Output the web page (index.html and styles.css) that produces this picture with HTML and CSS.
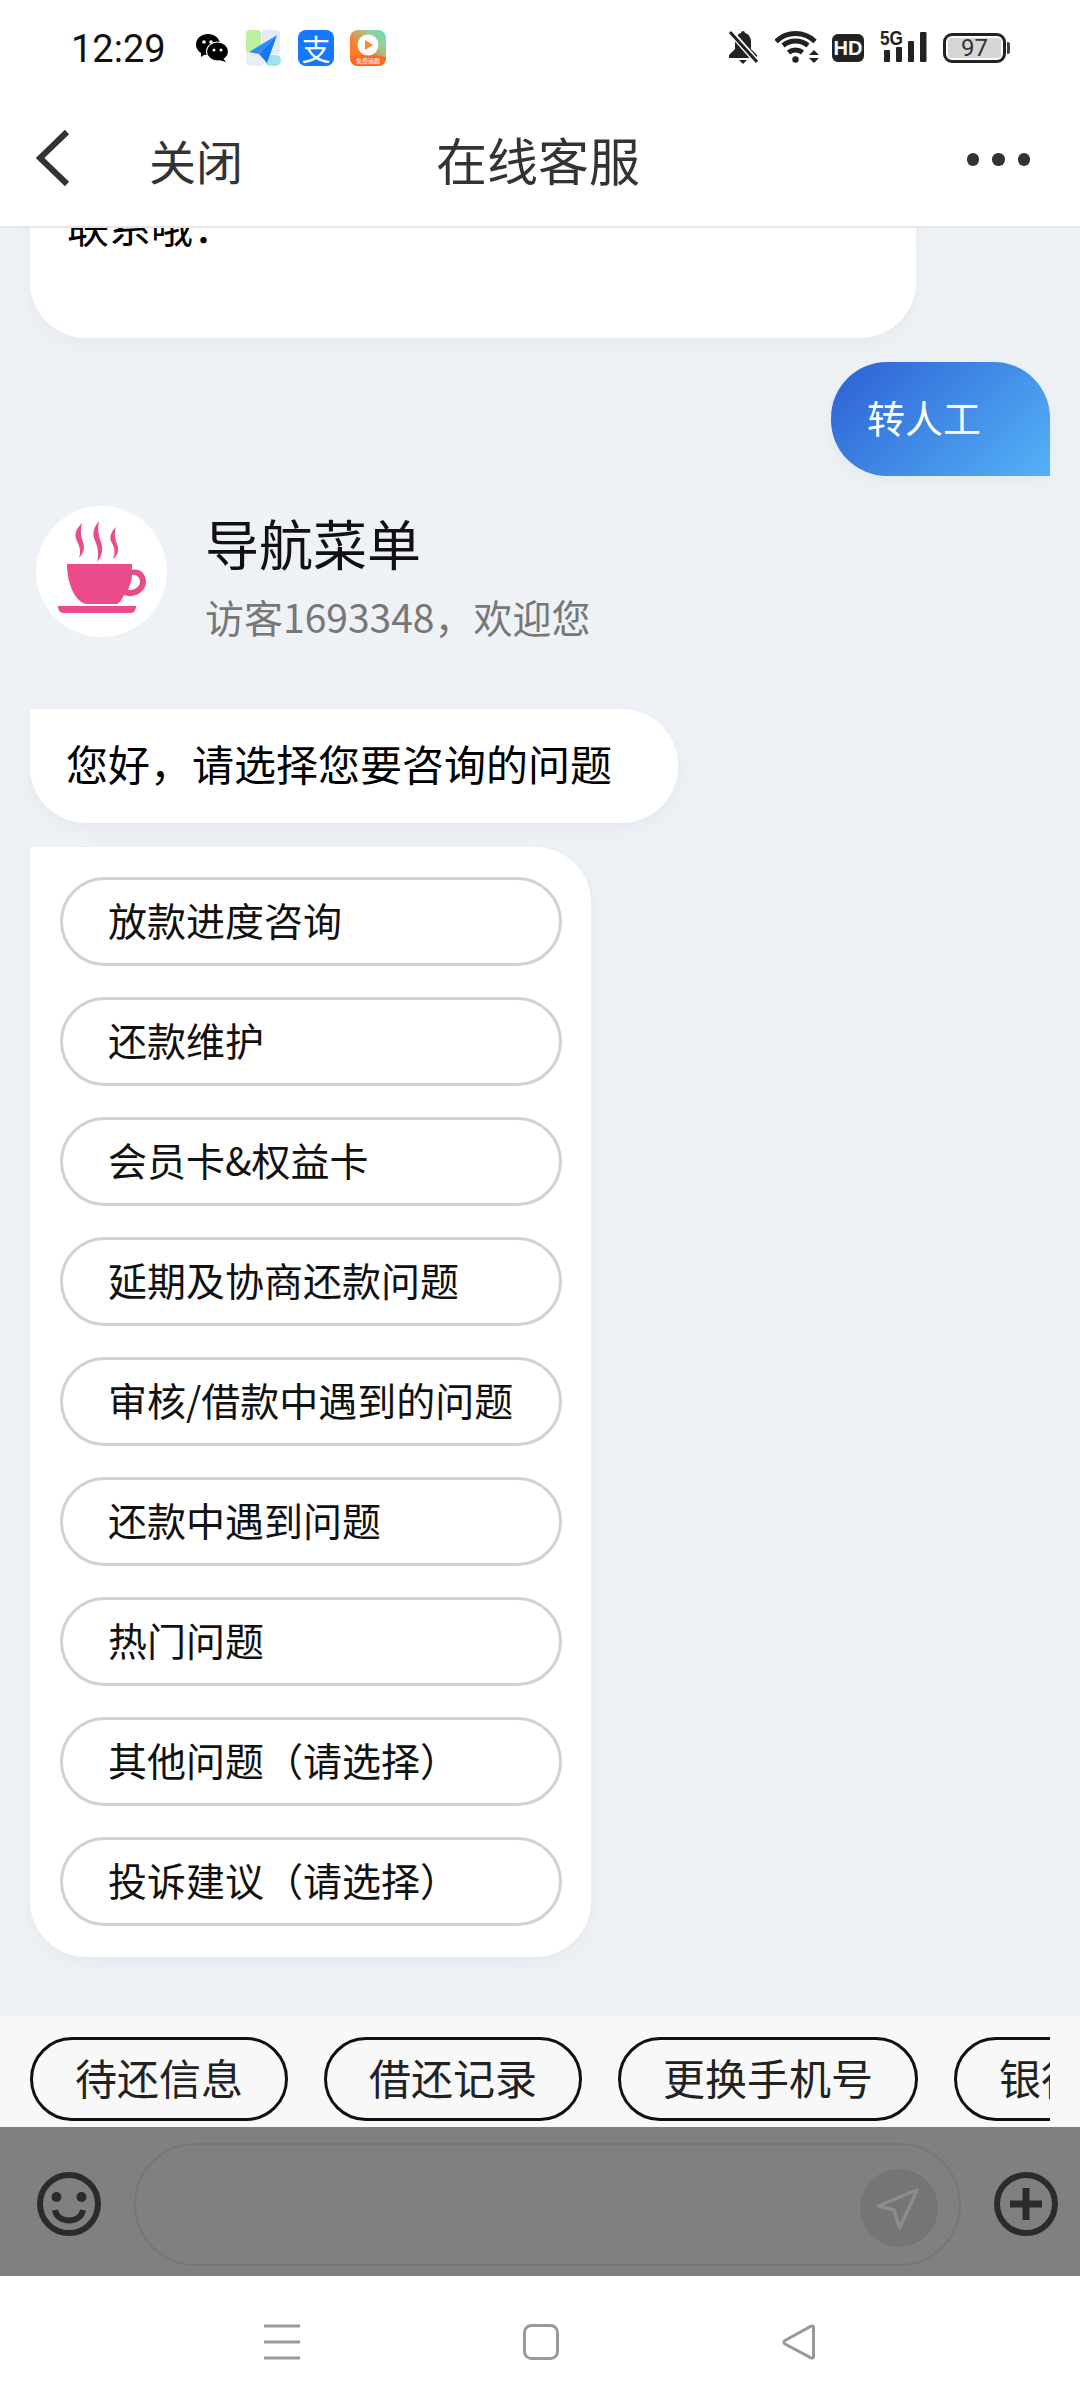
FILE: index.html
```html
<!DOCTYPE html>
<html lang="zh-CN">

<head>
    <meta charset="UTF-8">
    <meta name="viewport" content="width=device-width, initial-scale=1.0">
    <title>在线客服</title>
    <link rel="stylesheet" href="styles.css">
</head>

<body>
    <div class="phone">
        <!-- Status bar -->
        <div class="status-bar">
            <span class="time">12:29</span>
            <svg class="icon-wechat" width="32" height="28" viewBox="0 0 32 28">
                <ellipse cx="12" cy="10.5" rx="12" ry="10.5" fill="#000" />
                <path d="M5 17l0 6 6-4z" fill="#000" />
                <ellipse cx="21.5" cy="17.5" rx="11.5" ry="10" fill="#fff" />
                <ellipse cx="21.5" cy="17.5" rx="10.5" ry="9" fill="#000" />
                <path d="M27 24l3 4-7-2z" fill="#000" />
                <circle cx="8" cy="8" r="1.8" fill="#fff" />
                <circle cx="15" cy="8" r="1.8" fill="#fff" />
                <circle cx="18" cy="16" r="1.5" fill="#fff" />
                <circle cx="25" cy="16" r="1.5" fill="#fff" />
            </svg>
            <svg class="icon-app" width="36" height="36" viewBox="0 0 36 36">
                <rect x="0" y="0" width="15" height="24" rx="4" fill="#bdf0a0" />
                <rect x="16" y="0" width="18" height="24" rx="4" fill="#e3ecf6" />
                <rect x="0" y="22" width="18" height="14" rx="4" fill="#e8eef8" />
                <rect x="19" y="25" width="16" height="11" rx="5" fill="#9fe3f2" />
                <path d="M31 5L3 22l10 2z" fill="#2a8cf5" />
                <path d="M31 5L13 24l8 9z" fill="#1677f0" />
            </svg>
            <div class="icon-app alipay">支</div>
            <svg class="icon-app" width="36" height="36" viewBox="0 0 36 36">
                <defs>
                    <linearGradient id="videoBg" x1="0" y1="1" x2="1" y2="0">
                        <stop offset="0.35" stop-color="#ff7a26" />
                        <stop offset="0.75" stop-color="#8fd39a" />
                        <stop offset="1" stop-color="#62d8c0" />
                    </linearGradient>
                </defs>
                <rect width="36" height="36" rx="8" fill="url(#videoBg)" />
                <path d="M0 27q18-5 36 0v1a8 8 0 0 1-8 8H8a8 8 0 0 1-8-8z" fill="#ff6a1f" />
                <circle cx="18" cy="15" r="10.5" fill="#fff" />
                <path d="M15 10l8 5-8 5z" fill="#ff8a2a" />
                <text class="video-label" x="18" y="33" text-anchor="middle">免费追剧</text>
            </svg>
            <div class="status-right">
                <svg width="30" height="34" viewBox="0 0 30 34">
                    <path d="M15 1c-1 0-2 .8-2 2-4 1-6 5-6 9v7l-6 6v3h28v-3l-6-6v-7c0-4-2-8-6-9 0-1.200-1-2-2-2z" fill="#222" />
                    <path d="M11 30h8l-4 4z" fill="#222" />
                    <path d="M1 0l28 32" stroke="#fff" stroke-width="6" />
                    <path d="M2 2l27 30" stroke="#222" stroke-width="3" />
                </svg>
                <svg class="icon-wifi" width="44" height="33" viewBox="0 0 44 33" fill="none">
                    <path d="M1 11.500A28 28 0 0 1 40 11.500" stroke="#222" stroke-width="5" />
                    <path d="M8 15.500A20 20 0 0 1 33 15.500" stroke="#222" stroke-width="5" />
                    <path d="M13.500 22.500A11 11 0 0 1 27.500 22.500" stroke="#222" stroke-width="5" />
                    <circle cx="20.500" cy="29.500" r="3.200" fill="#222" />
                    <path d="M34 25h10l-5-5z" fill="#222" />
                    <path d="M34 28h10l-5 5z" fill="#222" />
                </svg>
                <div class="hd-badge">HD</div>
                <svg class="icon-signal" width="47" height="33" viewBox="0 0 47 33">
                    <text class="signal-label" x="0" y="15" textLength="23" lengthAdjust="spacingAndGlyphs">5G</text>
                    <rect x="4" y="20" width="6" height="12" rx="1" fill="#222" />
                    <rect x="16" y="17" width="6" height="15" rx="1" fill="#222" />
                    <rect x="28" y="11" width="6" height="21" rx="1" fill="#222" />
                    <rect x="40" y="2" width="6.500" height="30" rx="1" fill="#222" />
                </svg>
                <div class="battery">
                    <div class="battery-body"><span class="battery-level">97</span></div>
                    <div class="battery-tip"></div>
                </div>
            </div>
        </div>

        <!-- Title bar -->
        <div class="topbar">
            <svg class="back-icon" width="34" height="58" viewBox="0 0 34 58" fill="none">
                <path d="M31 3L4 29l27 26" stroke="#333" stroke-width="6" />
            </svg>
            <span class="close-link">关闭</span>
            <span class="page-title">在线客服</span>
            <div class="more-dots"><i></i><i></i><i></i></div>
        </div>

        <!-- Messages -->
        <div class="chat">
            <div class="bubble top-card">联系哦：</div>
            <div class="bubble bubble-me">转人工</div>

            <div class="bot-head">
                <div class="avatar">
                    <svg width="131" height="131" viewBox="0 0 131 131" fill="none">
                        <path d="M46 17c-9 9-7 14-4 20 2 5 3 10 1 15 5-5 6-10 4-16-2-6-3-11-1-19z" fill="#e94b8b" />
                        <path d="M63 15c-8 10-6 15-3 22 2 6 3 12 1 19 6-7 6-13 4-20-2-6-4-12-2-21z" fill="#e94b8b" />
                        <path d="M80 21c-8 8-6 13-3 18 2 4 2 9 0 14 6-5 6-10 4-15-2-5-3-10-1-17z" fill="#e94b8b" />
                        <path d="M31 58h65v6c7-2 14 3 14 12 0 10-12 17-22 13-2 4-4 8-7 9H50c-12-3-19-22-19-40z" fill="#e94b8b" />
                        <path d="M96 69c5-1 8 3 8 7 0 5-7 9-12 8 2-5 4-10 4-15z" fill="#fff" />
                        <path d="M22 100h78c0 4-2 7-5 7H27c-3 0-5-3-5-7z" fill="#e94b8b" />
                    </svg>
                </div>
                <div class="bot-info">
                    <div class="bot-name">导航菜单</div>
                    <div class="bot-welcome">访客1693348，欢迎您</div>
                </div>
            </div>

            <div class="bubble bubble-bot">您好，请选择您要咨询的问题</div>

            <div class="bubble menu-card">
                <div class="menu-option">放款进度咨询</div>
                <div class="menu-option">还款维护</div>
                <div class="menu-option">会员卡&amp;权益卡</div>
                <div class="menu-option">延期及协商还款问题</div>
                <div class="menu-option">审核/借款中遇到的问题</div>
                <div class="menu-option">还款中遇到问题</div>
                <div class="menu-option">热门问题</div>
                <div class="menu-option">其他问题（请选择）</div>
                <div class="menu-option">投诉建议（请选择）</div>
            </div>
        </div>

        <!-- Quick links -->
        <div class="quick-bar">
            <div class="quick-list">
                <div class="chip">待还信息</div>
                <div class="chip">借还记录</div>
                <div class="chip">更换手机号</div>
                <div class="chip">银行卡</div>
            </div>
        </div>

        <!-- Input (dimmed) -->
        <div class="input-bar">
            <svg class="round-icon" width="64" height="64" viewBox="0 0 64 64" fill="none">
                <circle cx="32" cy="32" r="29" stroke="#2b2b2b" stroke-width="6" />
                <circle cx="19.500" cy="25" r="5" fill="#2b2b2b" />
                <circle cx="44.500" cy="25" r="5" fill="#2b2b2b" />
                <path d="M18 38c2 14 26 14 28 0" stroke="#2b2b2b" stroke-width="6" />
            </svg>
            <div class="input-box">
                <div class="send-btn">
                    <svg width="78" height="78" viewBox="0 0 78 78" fill="none">
                        <path d="M57 21L18 37l16 4 5.500 18z" stroke="#8c8c8c" stroke-width="3.500" stroke-linejoin="round" />
                    </svg>
                </div>
            </div>
            <svg class="round-icon" width="64" height="64" viewBox="0 0 64 64" fill="none">
                <circle cx="32" cy="32" r="29" stroke="#2b2b2b" stroke-width="6" />
                <path d="M32 16v32M16 32h32" stroke="#2b2b2b" stroke-width="7" />
            </svg>
        </div>

        <!-- System navigation -->
        <div class="nav-bar">
            <svg width="36" height="36" viewBox="0 0 36 36" fill="none">
                <path d="M0 2h36M0 18h36M0 34h36" stroke="#999" stroke-width="3" />
            </svg>
            <svg width="36" height="36" viewBox="0 0 36 36" fill="none">
                <rect x="1.500" y="1.500" width="33" height="33" rx="7" stroke="#999" stroke-width="3" />
            </svg>
            <svg width="34" height="36" viewBox="0 0 34 36" fill="none">
                <path d="M31.500 3.500c0-1.500-1-2-2.500-1.300L3 16.500c-1.500 1-1.500 2.500 0 3.500l26 13.800c1.500.7 2.500.2 2.500-1.300z" stroke="#999" stroke-width="3" />
            </svg>
        </div>
    </div>
</body>

</html>
```

FILE: styles.css
```css
* {
    box-sizing: border-box;
}

body {
    margin: 0;
    padding: 0;
    background-color: #fff;
    font-family: "Noto Sans CJK SC", "Noto Sans", sans-serif;
}

.phone {
    width: 1080px;
    height: 2408px;
    display: flex;
    flex-direction: column;
    overflow: hidden;
}

/* status bar */
.status-bar {
    height: 90px;
    flex-shrink: 0;
    display: flex;
    align-items: flex-start;
    padding: 31px 70px 0 71px;
    background: #fff;
}

.time {
    font-family: Roboto, sans-serif;
    font-size: 38px;
    line-height: 36px;
    color: #111;
    width: 125px;
}

.icon-wechat {
    margin-top: 3px;
    margin-right: 18px;
}

.icon-app {
    width: 36px;
    height: 36px;
    margin-top: -1px;
    margin-right: 16px;
    flex-shrink: 0;
}

.alipay {
    background: #1677ff;
    border-radius: 8px;
    color: #fff;
    font-size: 29px;
    line-height: 36px;
    text-align: center;
}

.video-label {
    font-size: 6px;
    fill: #fff;
}

.status-right {
    margin-left: auto;
    margin-top: -1px;
    display: flex;
    align-items: flex-start;
}

.icon-wifi {
    margin-left: 17px;
}

.hd-badge {
    width: 32px;
    height: 28px;
    margin-top: 4px;
    margin-left: 13px;
    background: #222;
    border-radius: 6px;
    color: #fff;
    font-family: "Liberation Sans", sans-serif;
    font-size: 20px;
    font-weight: bold;
    line-height: 28px;
    text-align: center;
}

.icon-signal {
    margin-left: 16px;
}

.signal-label {
    font-family: "Liberation Sans", sans-serif;
    font-size: 20px;
    font-weight: bold;
    fill: #222;
}

.battery {
    display: flex;
    align-items: center;
    margin-left: 16px;
    margin-top: 3px;
}

.battery-body {
    width: 63px;
    height: 30px;
    border: 3px solid #222;
    border-radius: 9px;
    padding: 2px;
}

.battery-level {
    display: block;
    height: 20px;
    background: #d6d6d6;
    border-radius: 3px;
    font-family: Roboto, sans-serif;
    font-size: 24px;
    line-height: 20px;
    color: #333;
    text-align: center;
}

.battery-tip {
    width: 3px;
    height: 12px;
    margin-left: 1px;
    background: #444;
    border-radius: 0 2px 2px 0;
}

/* title bar */
.topbar {
    height: 138px;
    flex-shrink: 0;
    display: flex;
    align-items: center;
    padding: 0 0 0 36px;
    background: #fff;
    border-bottom: 2px solid #e6e6e6;
}

.back-icon {
    margin-right: 79px;
}

.close-link {
    font-size: 47px;
    color: #333;
    margin-top: 2px;
}

.page-title {
    margin-left: 193px;
    margin-top: 2px;
    font-size: 51px;
    color: #333;
}

.more-dots {
    margin-left: auto;
    margin-right: 50px;
    margin-top: 3px;
    display: flex;
    gap: 13px;
}

.more-dots i {
    width: 12.500px;
    height: 12.500px;
    border-radius: 50%;
    background: #333;
}

/* messages */
.chat {
    flex: 1;
    min-height: 0;
    overflow: hidden;
    display: flex;
    flex-direction: column;
    padding: 0 30px;
    background: #eef1f5;
}

.bubble {
    background: #fff;
    box-shadow: 0 6px 20px rgba(0, 0, 0, 0.04);
    color: #000;
    font-size: 42px;
    flex-shrink: 0;
}

.top-card {
    width: 886px;
    margin-top: -33px;
    padding: 0 37px 83px;
    line-height: 60px;
    border-radius: 0 0 56px 56px;
}

.bubble-me {
    align-self: flex-end;
    margin-top: 24px;
    padding: 0 69px 0 36px;
    height: 114px;
    line-height: 110px;
    font-size: 38px;
    color: #fff;
    background: linear-gradient(135deg, #2c60d4, #54b2f7);
    border-radius: 56px 56px 0 56px;
}

.bot-head {
    display: flex;
    height: 131px;
    margin-top: 30px;
    margin-left: 6px;
    flex-shrink: 0;
}

.avatar {
    width: 131px;
    height: 131px;
    border-radius: 50%;
    background: #fff;
    margin-right: 38px;
}

.bot-name {
    font-size: 54px;
    line-height: 74px;
    color: #111;
}

.bot-welcome {
    margin-top: 9px;
    font-size: 39px;
    line-height: 54px;
    color: #777;
}

.bubble-bot {
    align-self: flex-start;
    margin-top: 72px;
    height: 114px;
    padding: 0 66px 0 36px;
    line-height: 108px;
    border-radius: 0 56px 56px 56px;
}

.menu-card {
    width: 561px;
    margin-top: 24px;
    padding: 30px 29px 31px 30px;
    display: flex;
    flex-direction: column;
    gap: 31px;
    border-radius: 0 56px 56px 56px;
}

.menu-option {
    height: 89px;
    padding-left: 45px;
    border: 3px solid #d2d2d2;
    border-radius: 45px;
    font-size: 39px;
    line-height: 78px;
    color: #111;
    white-space: nowrap;
}

/* quick links */
.quick-bar {
    height: 111px;
    flex-shrink: 0;
    padding: 21px 30px 0;
    background: #f8f8f8;
}

.quick-list {
    display: flex;
    gap: 36px;
    overflow: hidden;
}

.chip {
    height: 84px;
    flex-shrink: 0;
    padding: 0 42px;
    border: 3px solid #111;
    border-radius: 42px;
    font-size: 42px;
    line-height: 74px;
    color: #222;
    white-space: nowrap;
}

.input-bar {
    height: 149px;
    flex-shrink: 0;
    display: flex;
    align-items: center;
    gap: 33px;
    padding: 5px 22px 0 37px;
    background: #808080;
}

.round-icon {
    flex-shrink: 0;
}

.input-box {
    flex: 1;
    height: 123px;
    display: flex;
    justify-content: flex-end;
    align-items: center;
    padding: 8px 21px 0 0;
    border: 2px solid #777;
    border-radius: 62px;
}

.send-btn {
    width: 78px;
    height: 78px;
    border-radius: 50%;
    background: #757575;
}

.send-btn svg {
    display: block;
}

/* system navigation */
.nav-bar {
    height: 132px;
    flex-shrink: 0;
    display: flex;
    align-items: flex-start;
    justify-content: center;
    gap: 223px;
    padding-top: 48px;
    background: #fff;
}
```
